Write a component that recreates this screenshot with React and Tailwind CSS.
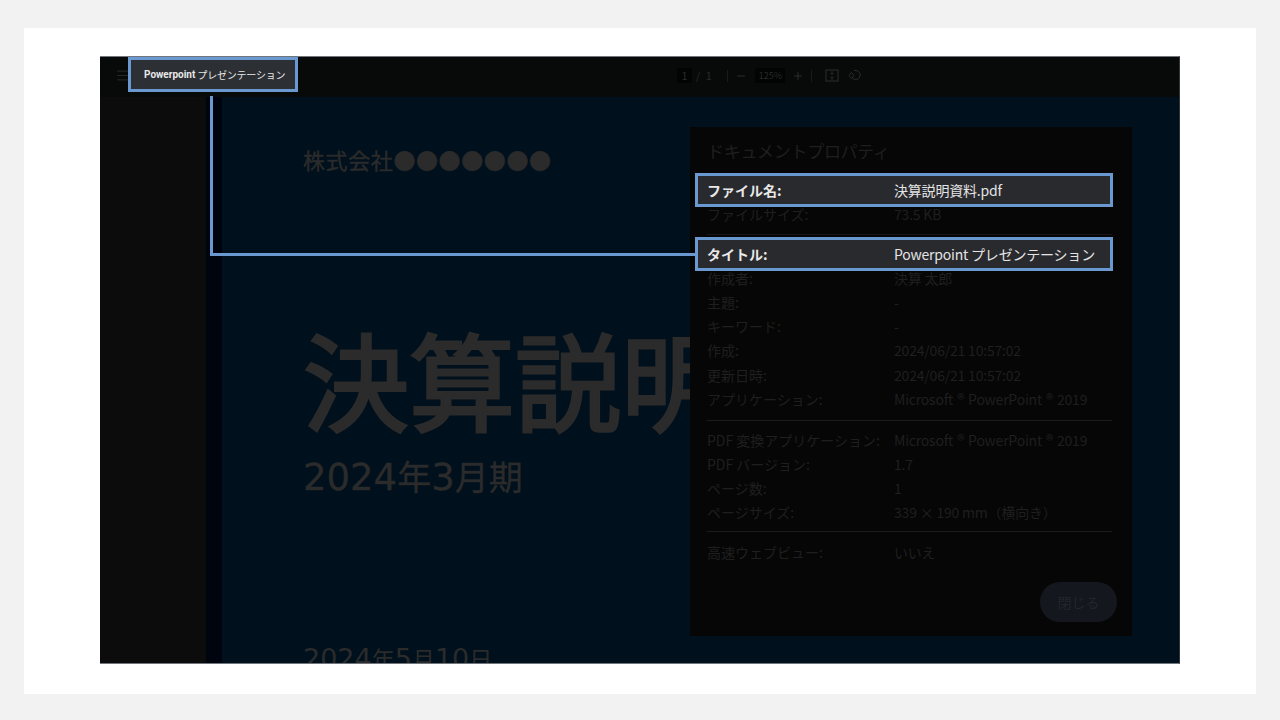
import React from "react";
import { Menu, Minus, Plus } from "lucide-react";

const jp = "font-['Noto_Sans_CJK_JP','Noto_Sans',sans-serif]";

// dialog row, the highlighted ones get the blue frame on top
const Row = ({ label, value, active, className = "" }) => (
    <div className={`relative flex h-[24px] items-center text-[14px] leading-[24px] ${className}`}>
        {active && <div className="absolute -left-[12px] -right-[1px] -top-[5px] -bottom-[5px] border-[3px] border-[#6a98d0] bg-[#292a2e]"></div>}
        <span className={`relative w-[187px] shrink-0 whitespace-nowrap ${active ? "font-semibold text-[#e8e8e8]" : "text-[#1f1f1f]"}`}>{label}</span>
        <span className={`relative whitespace-nowrap tracking-[-0.2px] ${active ? "text-[#e4e4e4]" : "text-[#1f1f1f]"}`}>{value}</span>
    </div>
);

const Office = () => (
    <>
        Microsoft<span className="mx-[4px] text-[15px]">®</span>PowerPoint<span className="mx-[4px] text-[15px]">®</span>2019
    </>
);

const Toolbar = () => (
    <div className="flex h-[40px] shrink-0 items-center bg-[#080a0a] pb-[3px] pl-[15px] text-[#2b2b2b]">
        <Menu size={15} strokeWidth={1.5} className="text-[#2a2a2a]" />
        <div className="ml-[547px] flex items-center text-[10px]">
            <span className="flex h-[15px] w-[15px] items-center justify-center bg-[#020303] text-[#2e2e2e]">1</span>
            <span className="ml-[4px]">/</span>
            <span className="ml-[6px]">1</span>
            <span className="ml-[16px] h-[12px] w-px bg-[#1a1a1a]"></span>
            <Minus size={12} className="ml-[7px]" />
            <span className="ml-[8px] flex h-[15px] w-[30px] items-center justify-center bg-[#020303] text-[9px]">125%</span>
            <Plus size={12} className="ml-[7px]" />
            <span className="ml-[7px] h-[12px] w-px bg-[#1a1a1a]"></span>
            <svg width="14" height="13" viewBox="0 0 14 13" fill="none" stroke="currentColor" className="ml-[13px]">
                <rect x="1" y="1" width="12" height="11" />
                <path d="M7 2v3M5.500 4 7 5.500 8.500 4M7 11V8M5.500 9 7 7.500 8.500 9" />
            </svg>
            <svg width="13" height="13" viewBox="0 0 13 13" fill="none" stroke="currentColor" className="ml-[9px]">
                <path d="M6 1.500h2a4.500 4.500 0 1 1-4 7" />
                <path d="M3.500 3.500 1 6.500l2.500 3 2.500-3z" />
            </svg>
        </div>
    </div>
);

const PropertiesDialog = () => (
    <div className="absolute left-[590px] top-[70px] h-[509px] w-[442px] bg-[#060606] pl-[17px] pr-[20px] pt-[12px]">
        <div className="mb-[15px] h-[24px] text-[17px] leading-[24px] tracking-[-0.300px] text-[#1f1f1f]">ドキュメントプロパティ</div>
        <Row active label="ファイル名:" value="決算説明資料.pdf" />
        <Row label="ファイルサイズ:" value="73.5 KB" />
        <hr className="mb-[7px] mt-[8px] border-[#161616]" />
        <Row active label="タイトル:" value="Powerpoint プレゼンテーション" />
        <Row label="作成者:" value="決算 太郎" />
        <Row label="主題:" value="-" />
        <Row label="キーワード:" value="-" />
        <Row label="作成:" value="2024/06/21 10:57:02" className="mb-px" />
        <Row label="更新日時:" value="2024/06/21 10:57:02" />
        <Row label="アプリケーション:" value={<Office />} />
        <hr className="mb-[7px] mt-[9px] border-[#1c1c1c]" />
        <Row label="PDF 変換アプリケーション:" value={<Office />} />
        <Row label="PDF バージョン:" value="1.7" />
        <Row label="ページ数:" value="1" />
        <Row label="ページサイズ:" value="339 × 190 mm（横向き）" />
        <hr className="mb-[8px] mt-[7px] border-[#1c1c1c]" />
        <Row label="高速ウェブビュー:" value="いいえ" />
        <div className="-mr-[5px] mt-[18px] flex justify-end">
            <button className="h-[40px] w-[77px] rounded-full bg-[#14171d] text-[14px] text-[#23262c]">閉じる</button>
        </div>
    </div>
);

const App = () => {
    return (
        <div className={`h-[720px] w-[1280px] overflow-hidden bg-[#f2f2f2] px-[24px] pt-[28px] ${jp}`}>
            <div className="h-[666px] bg-white px-[76px] pt-[28px]">
                <div className="relative flex h-[608px] flex-col overflow-hidden border-y border-r border-y-[#70767c] border-r-[#2f3338] bg-[#080a0a]">
                    <Toolbar />

                    <div className="flex min-h-0 flex-1">
                        <div className="w-[106px] shrink-0 bg-[#0b0c0b]"></div>
                        <div className="w-[16px] shrink-0 bg-[#00040f]"></div>
                        <div className="flex-1 overflow-hidden bg-[#00101c] pl-[81px] pt-[47px] text-[#2b2b2b]">
                            <div className="text-[22px] leading-[30px] tracking-[0.600px] whitespace-nowrap [-webkit-text-stroke:0.4px_#2b2b2b]">株式会社●●●●●●●</div>
                            <div className="mt-[143px] text-[106px] leading-[120px] whitespace-nowrap [-webkit-text-stroke:3px_#2b2b2b]">決算説明資料</div>
                            <div className="mt-[17px] text-[34px] leading-[44px] whitespace-nowrap [-webkit-text-stroke:0.3px_#2b2b2b]">
                                <span className="font-['DejaVu_Sans',sans-serif] text-[37px]">2024</span>年<span className="font-['DejaVu_Sans',sans-serif] text-[37px]">3</span>月期
                            </div>
                            <div className="mt-[143px] text-[23px] leading-[30px] whitespace-nowrap">
                                <span className="font-['DejaVu_Sans',sans-serif] text-[27px]">2024</span>年<span className="font-['DejaVu_Sans',sans-serif] text-[27px]">5</span>月<span className="font-['DejaVu_Sans',sans-serif] text-[27px]">10</span>日
                            </div>
                        </div>
                    </div>

                    <PropertiesDialog />

                    {/* callout frame round the tab title and the line to the dialog */}
                    <div className="absolute left-[28px] top-0 flex h-[35px] w-[170px] items-center border-[3px] border-[#6a98d0] bg-[#2c2f33] pl-[13px] text-[10px] whitespace-nowrap text-[#e8e8e8]">
                        <span className="font-['Roboto',sans-serif] font-bold">Powerpoint</span>
                        <span className="ml-[2px] tracking-[-0.200px]">プレゼンテーション</span>
                    </div>
                    <div className="absolute left-[110px] top-[39px] h-[160px] w-[485px] border-b-[3px] border-l-[3px] border-[#6a98d0]"></div>
                </div>
            </div>
        </div>
    );
};

export default App;
